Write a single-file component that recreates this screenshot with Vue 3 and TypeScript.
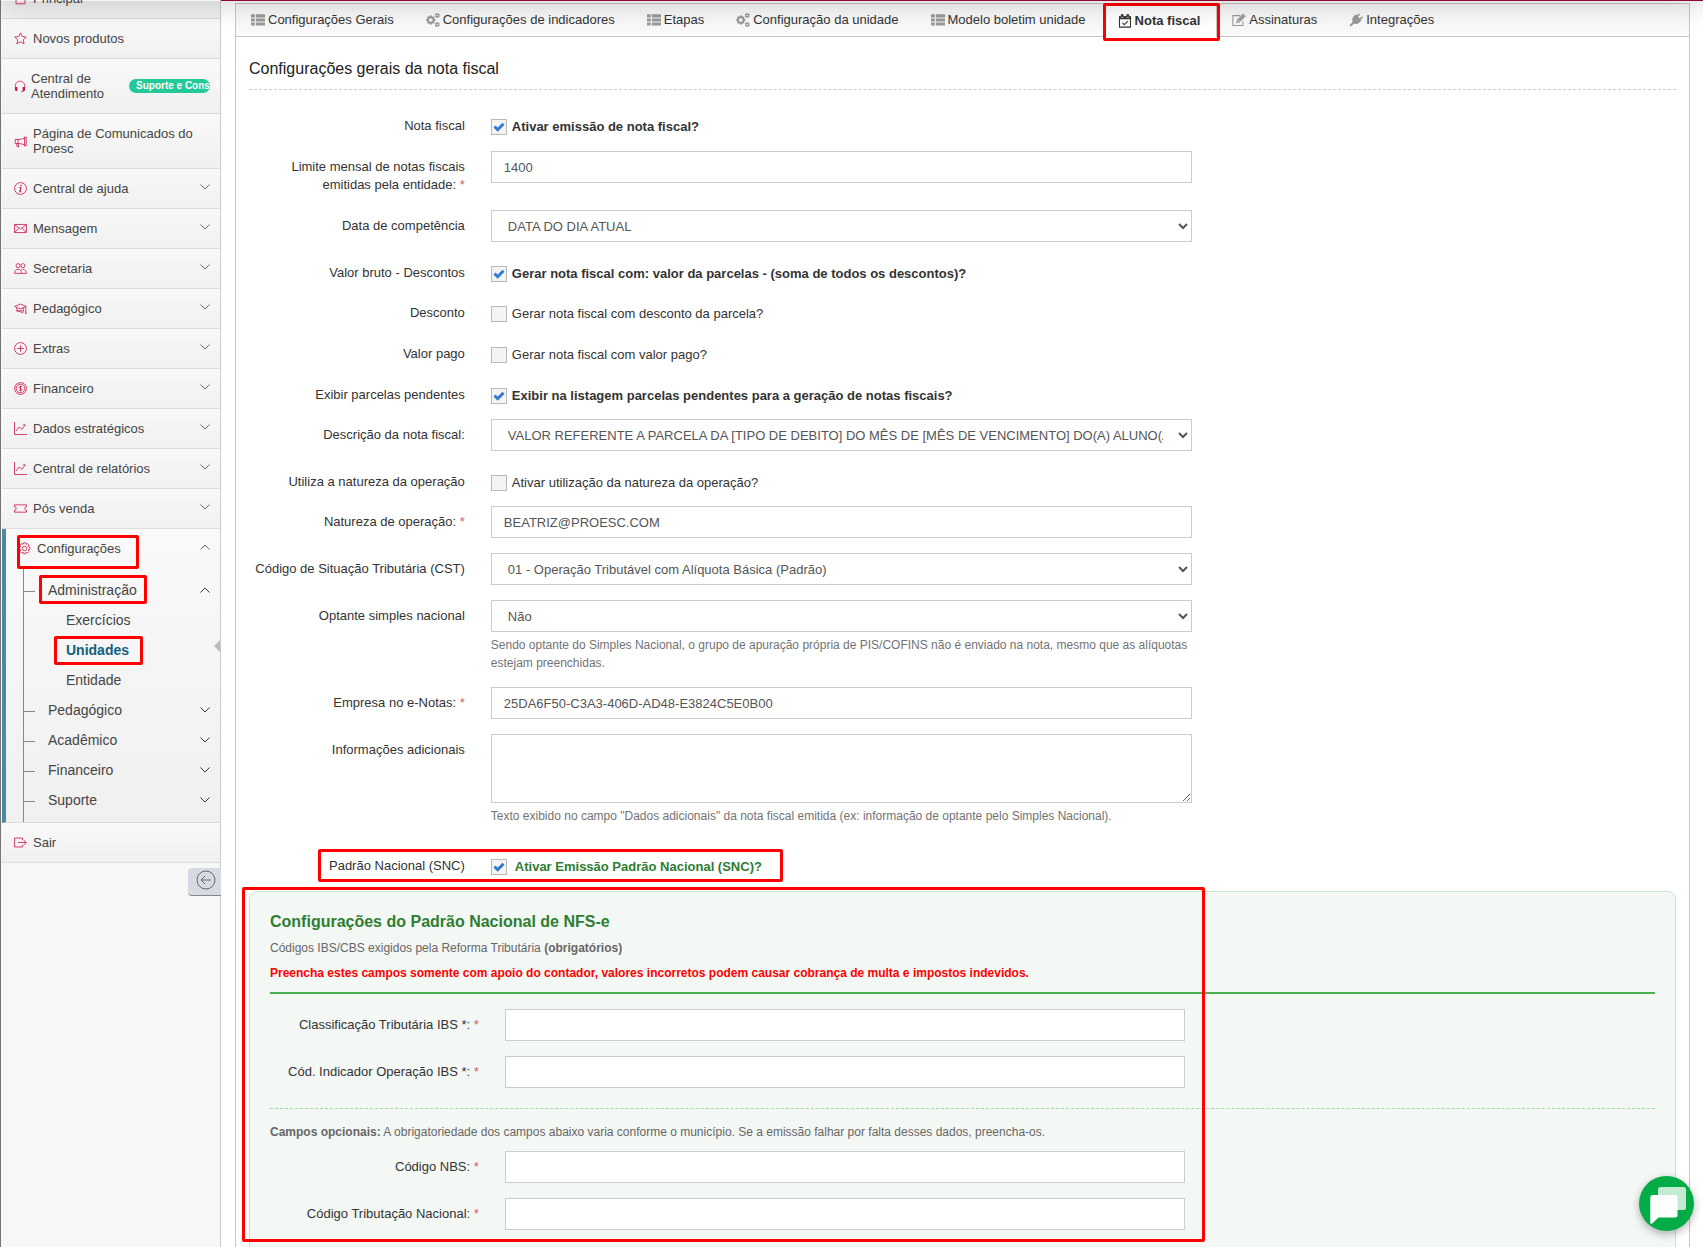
<script setup lang="ts">
import { ref } from 'vue'

interface Glyph {
  line?: string
  solid?: string
}

interface MenuItem {
  label: string
  icon: string
  arrow?: boolean
  badge?: string
}

interface FormRow {
  id: string
  label: string
  kind: 'check' | 'text' | 'select' | 'area'
  required?: boolean
  value?: string
  checked?: boolean
  text?: string
  help?: string
  roomy?: boolean
}

const glyphs: Record<string, Glyph> = {
  house: { line: 'M1 8l7-6.5L15 8M2.5 7v7.5h11V7' },
  star: { line: 'M8 1l2.1 4.6 5 .6-3.7 3.4 1 5L8 12.100l-4.400 2.500 1-5L.9 6.200l5-.6z' },
  headset: {
    line: 'M1.800 10V7a6.200 6.200 0 0 1 12.400 0v3M13.800 13c0 1.500-2 2-4.500 2',
    solid: 'M1.300 8.500h3.200v5.500H3a1.700 1.700 0 0 1-1.700-1.700zM14.700 8.500h-3.200v5.500H13a1.700 1.700 0 0 0 1.700-1.700z',
  },
  megaphone: { line: 'M13 2.500v11h2v-11zM13 3.500C10.500 5 8 5.500 5 5.500H1.500v5H5c3 0 5.500.5 8 2M5 5.500v5M3 10.500l1 4h2l-1-4' },
  info: { line: 'M8 .7a7.300 7.300 0 1 0 0 14.600A7.300 7.300 0 0 0 8 .7z', solid: 'M8.100 3.500h1.600L9.400 5.200H7.800zM6.300 6.500h3L8.100 11.600h1.200l-.2.9H6.300l1.200-5H6.100z' },
  mail: { line: 'M.7 3h14.600v10H.7zM1 3.500l7 5 7-5M1 12.500l5-4.500M15 12.500L10 8' },
  people: { line: 'M5 2a2.500 2.500 0 1 0 0 5 2.500 2.500 0 0 0 0-5zM11 2a2.500 2.500 0 1 0 0 5 2.500 2.500 0 0 0 0-5zM.7 14c0-3 1.500-5 4.300-5s4.300 2 4.300 5zM9 9.600c3.500-1.600 6.300 1 6.300 4.400H9.500' },
  cap: { line: 'M8 2.500L.8 5.500 8 8.500l7.200-3zM3.500 7v4.500c2-1 6-1 8 0V7M3.500 10c2 1.500 6 2.500 8 3.500M14.500 6v8M13.500 14h2' },
  plus: { line: 'M8 .7a7.300 7.300 0 1 0 0 14.600A7.300 7.300 0 0 0 8 .7zM8 4v8M4 8h8' },
  coin: { line: 'M8 .7a7.300 7.300 0 1 0 0 14.600A7.300 7.300 0 0 0 8 .7zM8 2.700a5.300 5.300 0 1 0 0 10.600A5.300 5.300 0 0 0 8 2.700zM10 6.300C9.800 5 6.200 5 6.200 6.700S10 7.800 10 9.400s-3.800 1.600-4 .1M8 4.500v7' },
  graph: { line: 'M.6 0v15.400H16M2.500 11l4-5 3 3L14 3.500M11 3.500h3.200' },
  ticket: { line: 'M.7 3.500h14.600V6a2 2 0 0 0 0 4v2.500H.7V10a2 2 0 0 0 0-4z' },
  gear: { line: 'M8 5.200a2.800 2.800 0 1 0 0 5.600 2.800 2.800 0 0 0 0-5.600zM6.700 1h2.600l.5 1.900 1.900-1 1.900 1.900-1 1.900 1.900.6v2.900l-1.900.6 1 1.900-1.900 1.900-1.900-1-.5 1.900H6.700l-.5-1.900-1.900 1-1.900-1.900 1-1.900-1.900-.6V6.300l1.900-.6-1-1.900L4.300 1.900l1.900 1z' },
  exit: { line: 'M10.500 5V2.500H.7v11h9.800V11M5 8h10M12 5l3 3-3 3' },
  list: { solid: 'M0 1.500h4.300V5H0zM5.500 1.500H16V5H5.500zM0 6.200h4.300v3.500H0zM5.500 6.200H16v3.500H5.500zM0 10.900h4.300v3.500H0zM5.500 10.900H16v3.500H5.500z' },
  cogs: {
    solid:
      'M4.300 2.800h2.400l.3 1.600 1.400-.8 1.500 1.500-.8 1.400 1.600.4v2.200l-1.600.4.8 1.400-1.500 1.500-1.400-.8-.3 1.600H4.300L4 11.600l-1.400.8-1.500-1.500.8-1.400L.3 9.100V6.900l1.600-.4-.8-1.400 1.500-1.500 1.400.8zM5.500 5.900a2.100 2.100 0 1 0 0 4.200 2.100 2.100 0 0 0 0-4.200zM12.200 0h1.400l.3 1 1-.3.8 1.200-.7.900.7.900-.8 1.200-1-.3-.3 1h-1.400l-.3-1-1 .3-.8-1.200.7-.9-.7-.9.8-1.200 1 .3zM12.900 1.900a.9.9 0 1 0 0 1.800.9.9 0 0 0 0-1.800zM12.200 10.400h1.400l.3 1 1-.3.8 1.200-.7.900.7.900-.8 1.200-1-.3-.3 1h-1.400l-.3-1-1 .3-.8-1.200.7-.9-.7-.9.8-1.200 1 .3zM12.900 12.300a.9.9 0 1 0 0 1.800.9.9 0 0 0 0-1.800z',
  },
  calendar: { line: 'M1.700 3.200h12.600v11.800H1.700zM5 10l2.200 2.200 4-4', solid: 'M1.500 2.800h13V6h-13zM3.300.3h3v4h-3zM9.700.3h3v4h-3z' },
  edit: { line: 'M12.500 9.500v4.800H1V3h8.500M5.500 11l.7-3 6.500-6.500 2.200 2.200L8.400 10.300zM7 8l2 2', solid: 'M7.500 7.500l5-5 1.500 1.500-5 5z' },
  plug: { solid: 'M9.500 2.500l2-2 1.200 1.200-2.400 2.700 1.800 1.800 2.700-2.400L16 5l-2.500 2.500.8.800-3 3a4.800 4.800 0 0 1-5.500.6L2 15.500.5 14l3.600-3.800a4.800 4.800 0 0 1 .6-5.500l3-3z' },
}

const menu: MenuItem[] = [
  { label: 'Principal', icon: 'house' },
  { label: 'Novos produtos', icon: 'star' },
  { label: 'Central de Atendimento', icon: 'headset', badge: 'Suporte e Consultoria' },
  { label: 'Página de Comunicados do Proesc', icon: 'megaphone' },
  { label: 'Central de ajuda', icon: 'info', arrow: true },
  { label: 'Mensagem', icon: 'mail', arrow: true },
  { label: 'Secretaria', icon: 'people', arrow: true },
  { label: 'Pedagógico', icon: 'cap', arrow: true },
  { label: 'Extras', icon: 'plus', arrow: true },
  { label: 'Financeiro', icon: 'coin', arrow: true },
  { label: 'Dados estratégicos', icon: 'graph', arrow: true },
  { label: 'Central de relatórios', icon: 'graph', arrow: true },
  { label: 'Pós venda', icon: 'ticket', arrow: true },
]

const adminPages = ['Exercícios', 'Unidades', 'Entidade']
const closedGroups = ['Pedagógico', 'Acadêmico', 'Financeiro', 'Suporte']

const tabs = [
  { label: 'Configurações Gerais', icon: 'list' },
  { label: 'Configurações de indicadores', icon: 'cogs' },
  { label: 'Etapas', icon: 'list' },
  { label: 'Configuração da unidade', icon: 'cogs' },
  { label: 'Modelo boletim unidade', icon: 'list' },
  { label: 'Nota fiscal', icon: 'calendar' },
  { label: 'Assinaturas', icon: 'edit' },
  { label: 'Integrações', icon: 'plug' },
]
const activeTab = ref('Nota fiscal')

const rows = ref<FormRow[]>([
  { id: 'ativar', label: 'Nota fiscal', kind: 'check', checked: true, text: 'Ativar emissão de nota fiscal?', roomy: true },
  { id: 'limite', label: 'Limite mensal de notas fiscais emitidas pela entidade:', kind: 'text', required: true, value: '1400', roomy: true },
  { id: 'competencia', label: 'Data de competência', kind: 'select', value: 'DATA DO DIA ATUAL' },
  { id: 'bruto', label: 'Valor bruto - Descontos', kind: 'check', checked: true, text: 'Gerar nota fiscal com: valor da parcelas - (soma de todos os descontos)?' },
  { id: 'desconto', label: 'Desconto', kind: 'check', checked: false, text: 'Gerar nota fiscal com desconto da parcela?', roomy: true },
  { id: 'pago', label: 'Valor pago', kind: 'check', checked: false, text: 'Gerar nota fiscal com valor pago?', roomy: true },
  { id: 'pendentes', label: 'Exibir parcelas pendentes', kind: 'check', checked: true, text: 'Exibir na listagem parcelas pendentes para a geração de notas fiscais?' },
  { id: 'descricao', label: 'Descrição da nota fiscal:', kind: 'select', value: 'VALOR REFERENTE A PARCELA DA [TIPO DE DEBITO] DO MÊS DE [MÊS DE VENCIMENTO] DO(A) ALUNO(A)' },
  { id: 'usa-natureza', label: 'Utiliza a natureza da operação', kind: 'check', checked: false, text: 'Ativar utilização da natureza da operação?' },
  { id: 'natureza', label: 'Natureza de operação:', kind: 'text', required: true, value: 'BEATRIZ@PROESC.COM' },
  { id: 'cst', label: 'Código de Situação Tributária (CST)', kind: 'select', value: '01 - Operação Tributável com Alíquota Básica (Padrão)' },
  {
    id: 'simples',
    label: 'Optante simples nacional',
    kind: 'select',
    value: 'Não',
    help: 'Sendo optante do Simples Nacional, o grupo de apuração própria de PIS/COFINS não é enviado na nota, mesmo que as alíquotas estejam preenchidas.',
  },
  { id: 'enotas', label: 'Empresa no e-Notas:', kind: 'text', required: true, value: '25DA6F50-C3A3-406D-AD48-E3824C5E0B00' },
  {
    id: 'info',
    label: 'Informações adicionais',
    kind: 'area',
    value: '',
    help: 'Texto exibido no campo "Dados adicionais" da nota fiscal emitida (ex: informação de optante pelo Simples Nacional).',
  },
])

const snc = ref(true)
const requiredCodes = ref([
  { id: 'class-ibs', label: 'Classificação Tributária IBS *:', value: '' },
  { id: 'ind-ibs', label: 'Cód. Indicador Operação IBS *:', value: '' },
])
const optionalCodes = ref([
  { id: 'nbs', label: 'Código NBS:', value: '' },
  { id: 'trib-nac', label: 'Código Tributação Nacional:', value: '' },
])
</script>

<template>
  <div class="page">
    <aside class="sidebar">
      <nav aria-label="Menu principal">
        <ul class="menu">
          <li v-for="item in menu" :key="item.label" class="menu-item">
            <a href="#" class="menu-link" :class="{ compact: item.badge }">
              <svg class="menu-icon" viewBox="0 0 16 16" aria-hidden="true">
                <path v-if="glyphs[item.icon].line" :d="glyphs[item.icon].line" fill="none" stroke="currentColor" />
                <path v-if="glyphs[item.icon].solid" :d="glyphs[item.icon].solid" fill="currentColor" />
              </svg>
              <span class="menu-text">{{ item.label }}</span>
              <span v-if="item.badge" class="badge">{{ item.badge }}</span>
              <svg v-if="item.arrow" class="chevron" viewBox="0 0 10 6" aria-hidden="true"><path d="M.5.5L5 5 9.500.5" /></svg>
            </a>
          </li>
          <li class="menu-item open">
            <a href="#" class="menu-link">
              <svg class="menu-icon" viewBox="0 0 16 16" aria-hidden="true">
                <path :d="glyphs.gear.line" fill="none" stroke="currentColor" />
              </svg>
              <span class="menu-text">Configurações</span>
              <svg class="chevron" viewBox="0 0 10 6" aria-hidden="true"><path d="M.5 5.500L5 1l4.500 4.500" /></svg>
              <span class="mark mark-config"></span>
            </a>
            <ul class="submenu">
              <li class="group">
                <a href="#" class="group-link">
                  <span>Administração</span>
                  <svg class="chevron dark" viewBox="0 0 10 6" aria-hidden="true"><path d="M.5 5.500L5 1l4.500 4.500" /></svg>
                  <span class="mark mark-admin"></span>
                </a>
                <ul class="leafs">
                  <li v-for="name in adminPages" :key="name">
                    <a href="#" class="leaf" :class="{ current: name === 'Unidades' }">
                      {{ name }}
                      <span v-if="name === 'Unidades'" class="mark mark-unit"></span>
                    </a>
                  </li>
                </ul>
              </li>
              <li v-for="name in closedGroups" :key="name" class="group">
                <a href="#" class="group-link">
                  <span>{{ name }}</span>
                  <svg class="chevron dark" viewBox="0 0 10 6" aria-hidden="true"><path d="M.5.5L5 5 9.500.5" /></svg>
                </a>
              </li>
            </ul>
          </li>
          <li class="menu-item">
            <a href="#" class="menu-link">
              <svg class="menu-icon" viewBox="0 0 16 16" aria-hidden="true">
                <path :d="glyphs.exit.line" fill="none" stroke="currentColor" />
              </svg>
              <span class="menu-text">Sair</span>
            </a>
          </li>
        </ul>
      </nav>
      <button type="button" class="collapse" aria-label="Recolher menu">
        <svg viewBox="0 0 20 20" aria-hidden="true">
          <circle cx="10" cy="10" r="9" />
          <path d="M15 10H5.500M9 6l-4 4 4 4" />
        </svg>
      </button>
    </aside>

    <main class="main">
      <section class="panel">
        <nav class="tabs" aria-label="Seções">
          <button
            v-for="tab in tabs"
            :key="tab.label"
            type="button"
            class="tab"
            :class="{ active: tab.label === activeTab }"
            @click="activeTab = tab.label"
          >
            <svg viewBox="0 0 16 16" aria-hidden="true">
              <path v-if="glyphs[tab.icon].line" :d="glyphs[tab.icon].line" fill="none" stroke="currentColor" stroke-width="1.200" />
              <path v-if="glyphs[tab.icon].solid" :d="glyphs[tab.icon].solid" fill="currentColor" fill-rule="evenodd" />
            </svg>
            <span>{{ tab.label }}</span>
            <span v-if="tab.label === 'Nota fiscal'" class="mark mark-tab"></span>
          </button>
        </nav>

        <form class="body" @submit.prevent>
          <h1 class="title">Configurações gerais da nota fiscal</h1>

          <div v-for="row in rows" :key="row.id" class="row" :class="{ roomy: row.roomy }">
            <label class="caption" :for="row.id">{{ row.label }} <span v-if="row.required" class="req">*</span></label>
            <div class="control">
              <label v-if="row.kind === 'check'" class="check" :class="{ strong: row.checked }">
                <input :id="row.id" v-model="row.checked" type="checkbox" />
                <svg class="tick" viewBox="0 0 16 16" aria-hidden="true"><path d="M3.500 7.500l3.200 3.200 5.800-6" /></svg>
                <span>{{ row.text }}</span>
              </label>
              <input v-else-if="row.kind === 'text'" :id="row.id" v-model="row.value" class="field" type="text" />
              <select v-else-if="row.kind === 'select'" :id="row.id" v-model="row.value" class="field">
                <option :value="row.value">{{ row.value }}</option>
              </select>
              <textarea v-else :id="row.id" v-model="row.value" class="field area"></textarea>
              <p v-if="row.help" class="help">{{ row.help }}</p>
            </div>
          </div>

          <div class="row roomy snc-row">
            <label class="caption" for="snc">Padrão Nacional (SNC)</label>
            <div class="control">
              <label class="check strong green">
                <input id="snc" v-model="snc" type="checkbox" />
                <svg class="tick" viewBox="0 0 16 16" aria-hidden="true"><path d="M3.500 7.500l3.200 3.200 5.800-6" /></svg>
                <span>Ativar Emissão Padrão Nacional (SNC)?</span>
              </label>
            </div>
            <span class="mark mark-snc"></span>
          </div>

          <section v-if="snc" class="national">
            <header class="national-head">
              <h2>Configurações do Padrão Nacional de NFS-e</h2>
              <p>Códigos IBS/CBS exigidos pela Reforma Tributária <b>(obrigatórios)</b></p>
              <p class="warning">Preencha estes campos somente com apoio do contador, valores incorretos podem causar cobrança de multa e impostos indevidos.</p>
            </header>
            <div v-for="code in requiredCodes" :key="code.id" class="row">
              <label class="caption" :for="code.id">{{ code.label }} <span class="req">*</span></label>
              <div class="control"><input :id="code.id" v-model="code.value" class="field" type="text" /></div>
            </div>
            <p class="optional"><b>Campos opcionais:</b> A obrigatoriedade dos campos abaixo varia conforme o município. Se a emissão falhar por falta desses dados, preencha-os.</p>
            <div v-for="code in optionalCodes" :key="code.id" class="row">
              <label class="caption" :for="code.id">{{ code.label }} <span class="req">*</span></label>
              <div class="control"><input :id="code.id" v-model="code.value" class="field" type="text" /></div>
            </div>
            <span class="mark mark-national"></span>
          </section>
        </form>
      </section>
    </main>

    <div class="top-shade"></div>

    <button type="button" class="chat" aria-label="Abrir chat">
      <svg viewBox="0 0 55 55" aria-hidden="true">
        <path d="M22 11h22.500a2.500 2.500 0 0 1 2.500 2.500v18a2.500 2.500 0 0 1-2.500 2.500H19V14a3 3 0 0 1 3-3z" fill="#fff" opacity=".76" />
        <path d="M14 19h22a2.500 2.500 0 0 1 2.500 2.500V39a2.500 2.500 0 0 1-2.500 2.500H19.500L13.500 47.300c-1.200 1-2.200.6-2.200-.8v-25A2.500 2.500 0 0 1 14 19z" fill="#fff" />
      </svg>
    </button>
  </div>
</template>

<style>
body {
  margin: 0;
  background: #fff;
}
</style>

<style scoped>
.page,
.page * {
  box-sizing: border-box;
}

.page {
  position: relative;
  display: flex;
  height: 100vh;
  overflow: hidden;
  font-family: 'Liberation Sans', Arial, sans-serif;
  font-size: 13px;
  line-height: 18px;
  color: #333;
}

.page ul {
  list-style: none;
  margin: 0;
  padding: 0;
}

a {
  color: inherit;
  text-decoration: none;
}

button {
  font: inherit;
  color: inherit;
  cursor: pointer;
}

/* Sidebar */
.sidebar {
  flex: 0 0 221px;
  padding-left: 1px;
  border-left: 1px solid #757575;
  border-right: 1px solid #ccc;
  background: #f7f7f7;
}

.menu {
  margin-top: -21px !important;
}

.menu-item {
  border-bottom: 1px solid #dcdcdc;
  background: linear-gradient(#f9f9f9, #f0f0f0);
}

.menu-link {
  position: relative;
  display: flex;
  align-items: center;
  gap: 6px;
  padding: 12px 10px 12px 12px;
  line-height: 15px;
  color: #444;
}

.menu-link.compact {
  gap: 5px;
  overflow: hidden;
}

.menu-icon {
  flex: none;
  width: 13px;
  height: 13px;
  color: #c9184a;
}

.compact .menu-icon {
  width: 12px;
}

.menu-text {
  flex: 1;
}

.badge {
  flex: none;
  width: 81px;
  height: 14px;
  padding-left: 7px;
  border-radius: 7px;
  background: #23c998;
  color: #fff;
  font-size: 10px;
  font-weight: bold;
  line-height: 14px;
  white-space: nowrap;
}

.chevron {
  flex: none;
  width: 10px;
  height: 6px;
  margin-bottom: 3px;
  fill: none;
  stroke: #666;
}

.chevron.dark {
  margin: 0;
  stroke: #333;
}

.open {
  border-left: 4px solid #4f88a3;
}

.open > .menu-link {
  padding-bottom: 19px;
}

.submenu {
  position: relative;
  padding-bottom: 7px !important;
}

.submenu::before {
  content: '';
  position: absolute;
  top: -6px;
  bottom: 0;
  left: 17px;
  border-left: 1px solid #888;
}

.group-link {
  position: relative;
  display: flex;
  align-items: center;
  justify-content: space-between;
  height: 30px;
  padding: 0 10px 0 42px;
  font-size: 14px;
  color: #444;
}

.group-link::before {
  content: '';
  position: absolute;
  top: 16px;
  left: 18px;
  width: 11px;
  border-top: 1px solid #888;
}

.leaf {
  position: relative;
  display: block;
  padding-left: 60px;
  font-size: 14px;
  line-height: 30px;
  color: #444;
}

.leaf.current {
  color: #12607c;
  font-weight: bold;
}

.leaf.current::after {
  content: '';
  position: absolute;
  top: 5px;
  right: 0;
  border: 6px solid transparent;
  border-left-width: 0;
  border-right-color: #bbb;
}

.collapse {
  display: flex;
  align-items: center;
  justify-content: center;
  width: 33px;
  height: 28px;
  margin: 5px -1px 0 auto;
  padding: 0 0 3px 2px;
  border: 0;
  border-bottom: 1px solid #888;
  border-radius: 4px 0 0 4px;
  background: #d6dae3;
}

.collapse svg {
  width: 20px;
  height: 20px;
  fill: none;
  stroke: #666;
}

/* Outline boxes drawn over the steps to follow */
.mark {
  position: absolute;
  border: 3px solid #f00;
  border-radius: 2px;
  pointer-events: none;
}

.mark-config {
  top: 6px;
  left: 11px;
  width: 122px;
  height: 34px;
}

.mark-admin {
  top: 0;
  left: 33px;
  width: 108px;
  height: 29px;
}

.mark-unit {
  top: 1px;
  left: 48px;
  width: 89px;
  height: 29px;
}

.mark-tab {
  inset: -1px -4px -4px -1px;
}

.mark-snc {
  top: -1px;
  left: 81px;
  width: 465px;
  height: 33px;
}

.mark-national {
  top: -5px;
  left: -8px;
  width: 963px;
  height: 355px;
}

/* Main panel */
.main {
  flex: 1;
  min-width: 0;
  padding: 2px 13px 0 14px;
  border-top: 1px solid #8c0b2c;
}

.panel {
  min-height: 100%;
  border: 1px solid #c5c5c5;
}

.tabs {
  display: flex;
  height: 33px;
  border-bottom: 1px solid #c5c5c5;
  background: #f9f9f9;
}

.tab {
  position: relative;
  display: flex;
  align-items: center;
  gap: 3px;
  height: 32px;
  padding: 0 16px 0 14px;
  border: 0 solid transparent;
  border-width: 0 1px;
  background: none;
  white-space: nowrap;
}

.tab svg {
  width: 14px;
  height: 14px;
  color: #999;
}

.tab.active {
  height: 33px;
  border-color: #c5c5c5;
  background: #fff;
  font-weight: bold;
}

.tab.active svg {
  color: #333;
}

.body {
  padding: 22px 13px 0;
}

.title {
  margin: 0 0 20px;
  padding-bottom: 10px;
  border-bottom: 1px dashed #ccc;
  font-size: 16px;
  font-weight: normal;
  line-height: 20px;
  color: #222;
}

.row {
  position: relative;
  display: flex;
  margin: 0 -12px 15px;
}

.row.roomy {
  margin-bottom: 16px;
}

.caption {
  flex: 0 0 calc(100% / 6);
  padding: 7px 14px 0 10px;
  text-align: right;
}

.req {
  color: #cf5f5f;
}

.control {
  flex: 0 0 50%;
  min-width: 0;
  padding: 0 12px;
}

.field {
  display: block;
  width: 100%;
  height: 32px;
  margin: 0;
  padding: 0 12px;
  border: 1px solid #ccc;
  border-radius: 0;
  outline: 0;
  background: #fff;
  color: #555;
  font: inherit;
}

.area {
  height: 69px;
  padding: 6px 12px;
  resize: vertical;
}

.help {
  margin: 4px 0 0;
  font-size: 12px;
  color: #737373;
}

.check {
  position: relative;
  display: flex;
  align-items: center;
  gap: 5px;
  padding-top: 8px;
  line-height: 17px;
}

.check.strong {
  font-weight: bold;
}

.check.green {
  gap: 8px;
  color: #2e7d32;
}

.check input {
  flex: none;
  appearance: none;
  width: 16px;
  height: 16px;
  margin: 1px 0 0;
  border: 1px solid #b9b9b9;
  background: #f4f4f4;
}

.tick {
  position: absolute;
  top: 9px;
  left: 0;
  width: 16px;
  height: 16px;
  fill: none;
  stroke: #2e7bd0;
  stroke-width: 3px;
  visibility: hidden;
  pointer-events: none;
}

.check input:checked + .tick {
  visibility: visible;
}

.snc-row {
  margin-top: 25px;
}

/* National standard box */
.national {
  position: relative;
  padding: 20px;
  border: 1px solid #c8e6c9;
  border-radius: 8px;
  background: #f4f8f5;
}

.national-head {
  margin-bottom: 15px;
  padding-bottom: 10px;
  border-bottom: 2px solid #4caf50;
  font-size: 12px;
  color: #666;
}

.national-head h2 {
  margin: 0;
  font-size: 16px;
  line-height: 20px;
  color: #2e7d32;
}

.national-head p {
  margin: 7px 0 0;
}

.national-head .warning {
  color: #f00;
  font-weight: bold;
}

.optional {
  margin: 20px 0 10px;
  padding-top: 14px;
  border-top: 1px dashed #a5d6a7;
  font-size: 12px;
  color: #666;
}

/* Shadow cast by the bar above the page */
.top-shade {
  position: absolute;
  top: -19px;
  left: 0;
  right: 0;
  height: 20px;
  box-shadow: 0 0 30px rgba(0, 0, 0, 0.25);
  clip-path: inset(20px 0 -50px 0);
  pointer-events: none;
}

.chat {
  position: fixed;
  right: 9px;
  bottom: 16px;
  width: 55px;
  height: 55px;
  padding: 0;
  border: 0;
  border-radius: 50%;
  background: #03ac46;
  box-shadow: 0 3px 8px rgba(0, 0, 0, 0.3);
}

.chat svg {
  display: block;
  width: 55px;
  height: 55px;
}
</style>
